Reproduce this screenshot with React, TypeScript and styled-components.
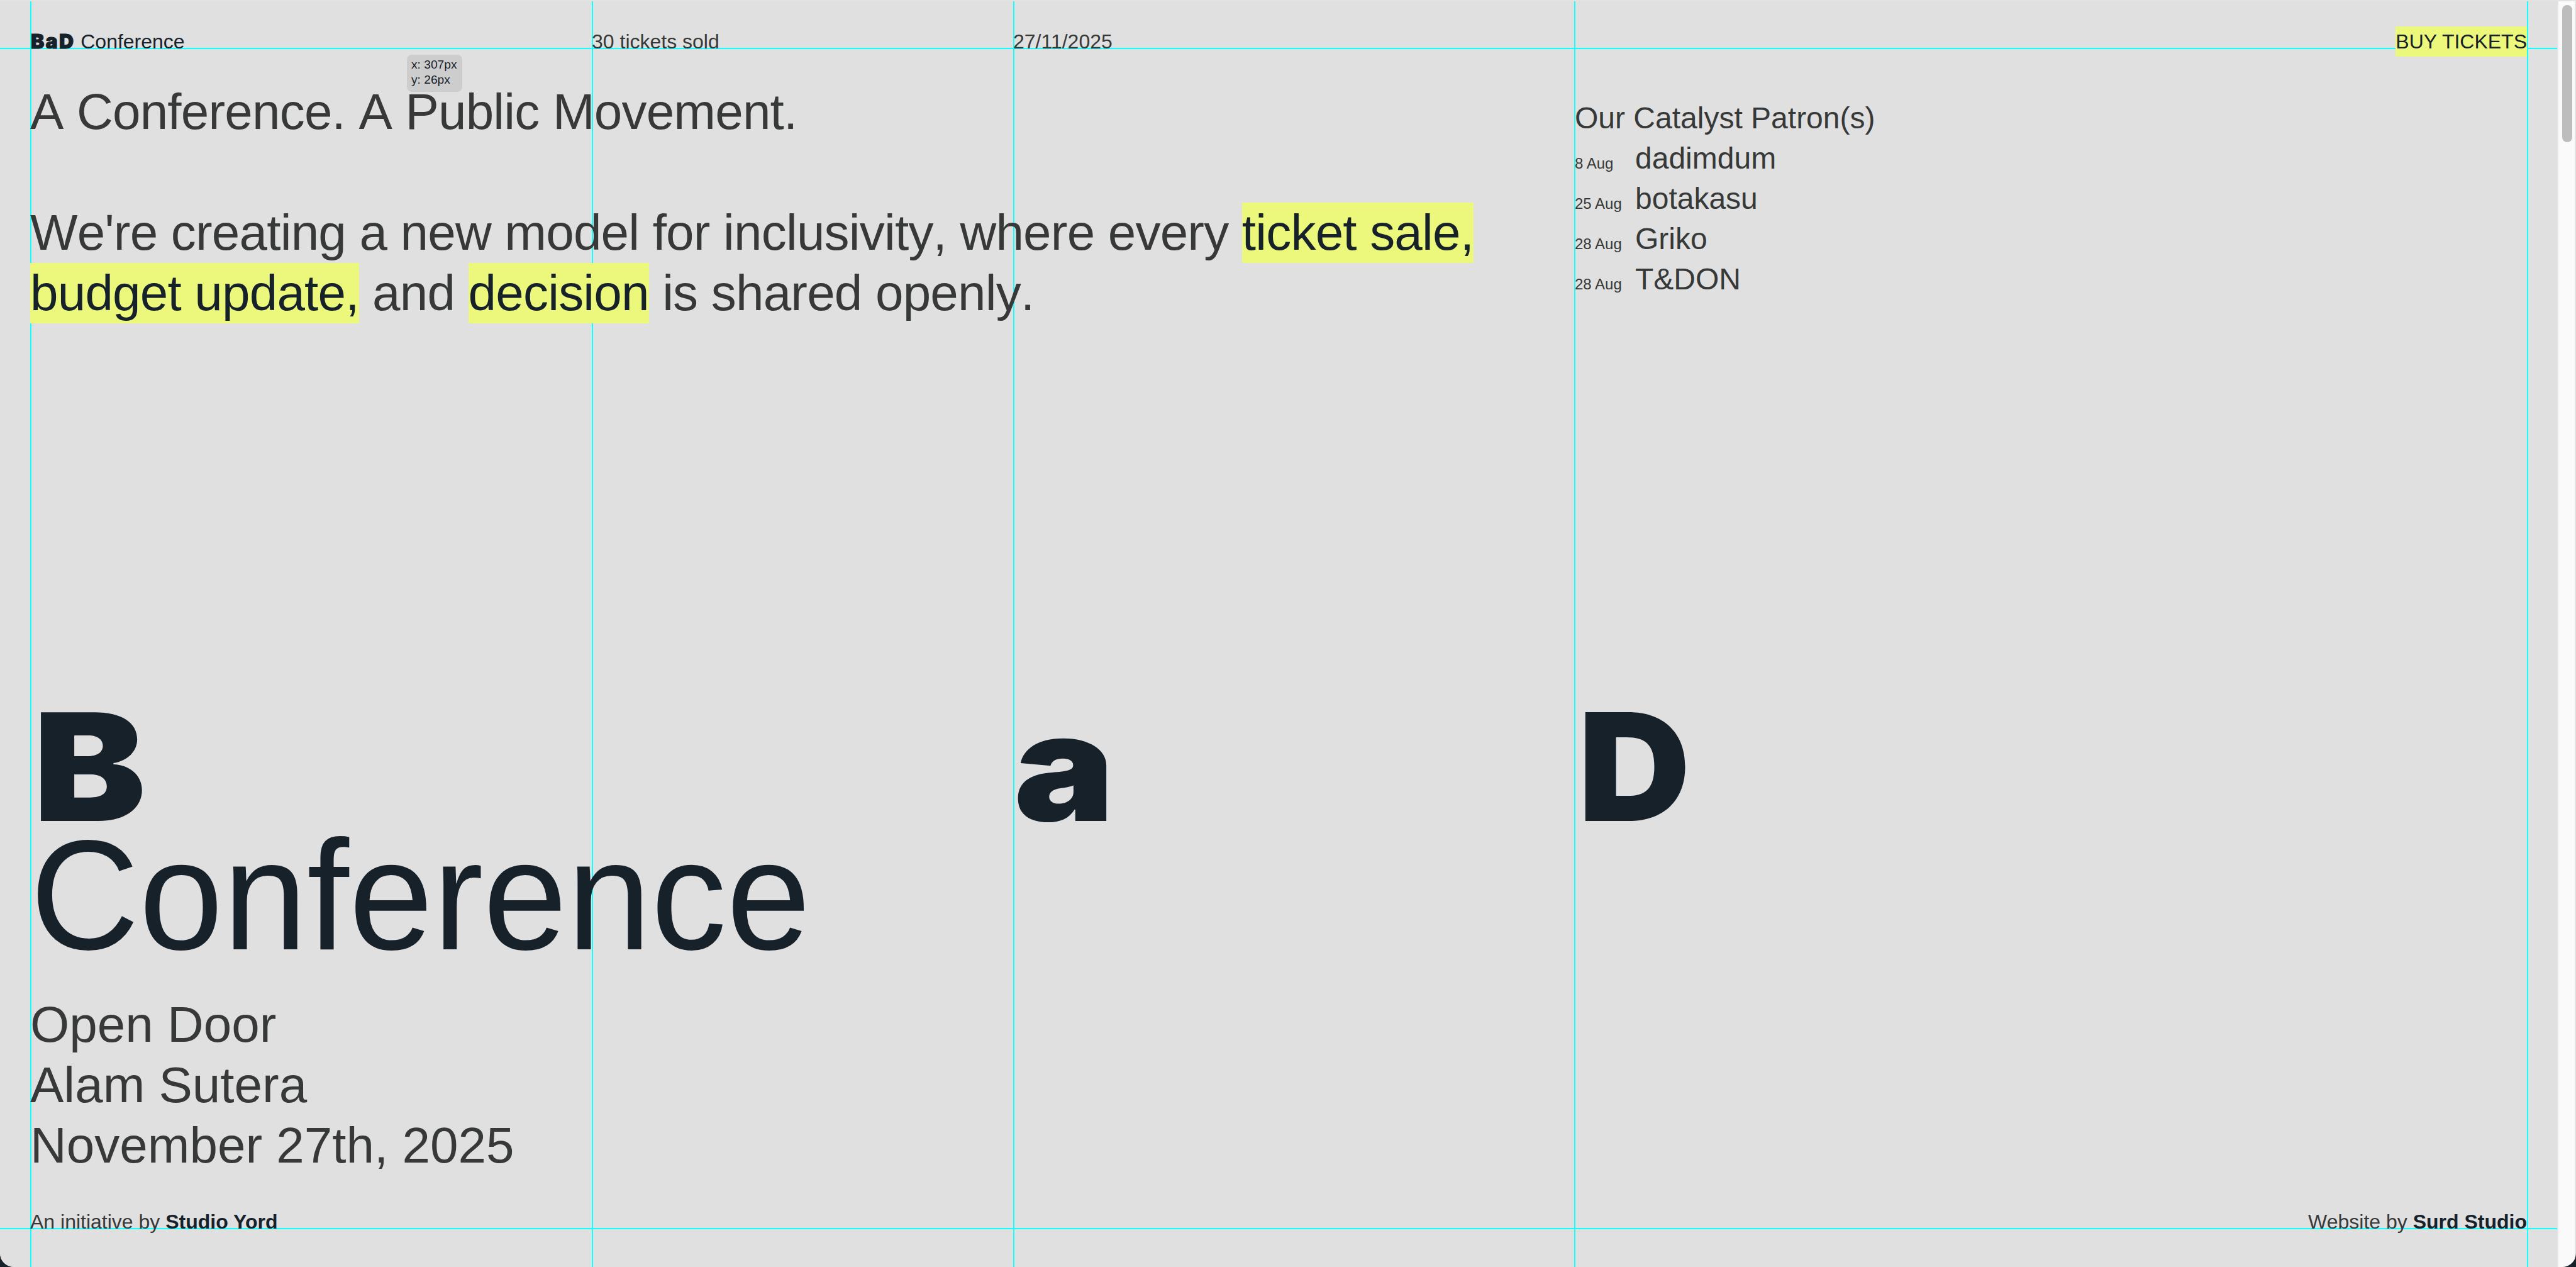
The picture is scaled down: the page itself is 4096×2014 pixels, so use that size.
import React from "react";
import styled, { createGlobalStyle } from "styled-components";

const colors = {
  paper: "#e0e0e0",
  ink: "#17212a",
  text: "#373938",
  lime: "#ecf87c",
  guide: "#12ffff",
};

const GlobalStyle = createGlobalStyle`
  * {
    box-sizing: border-box;
  }
  body {
    margin: 0;
    background: ${colors.ink};
    color: ${colors.text};
    font-family: "Liberation Sans", Arial, sans-serif;
    font-size: 32px;
    line-height: 48px;
  }
  p, h1, h2, ul {
    margin: 0;
    padding: 0;
    font-weight: 400;
  }
`;

const Window = styled.div`
  display: flex;
  width: 4096px;
  height: 2014px;
  padding: 2px 2px 0 0;
  overflow: hidden;
  background: #e3e3e3;
  border-radius: 0 0 22px 22px;
`;

const Page = styled.div`
  position: relative;
  isolation: isolate;
  flex-shrink: 0;
  display: flex;
  flex-direction: column;
  width: 4066px;
  background: ${colors.paper};
`;

const Scrollbar = styled.div`
  flex-shrink: 0;
  width: 26px;
  margin-left: 2px;
  padding: 6px 0 0 6px;
  background: #fafafa;
`;

const Thumb = styled.div`
  width: 16px;
  height: 218px;
  border-radius: 8px;
  background: #bdbdbd;
`;

const Guide = styled.div<{ $axis: "x" | "y"; $at: number }>`
  position: absolute;
  z-index: -1;
  background: ${colors.guide};
  ${({ $axis, $at }) =>
    $axis === "x"
      ? `left: ${$at}px; top: 0; bottom: 0; width: 2px;`
      : `top: ${$at}px; left: 0; right: 0; height: 2px;`}
`;

const Columns = styled.div`
  display: grid;
  grid-template-columns: 893px 670px 893px 1fr;
  padding: 0 48px;
`;

const Header = styled(Columns)`
  padding-top: 40px;
  height: 88px;
`;

const Brand = styled.span`
  color: ${colors.ink};
`;

const Black = styled.span`
  font-family: Inter, sans-serif;
  font-weight: 900;
`;

const BrandMark = styled(Black)`
  padding-left: 1px;
  letter-spacing: 0.07em;
  -webkit-text-stroke: 1px ${colors.ink};
`;

const Highlight = styled.span`
  display: inline-block;
  background: ${colors.lime};
  color: ${colors.ink};
`;

const BuyLink = styled(Highlight)`
  justify-self: end;
  height: 48px;
`;

const Intro = styled.div`
  display: grid;
  grid-template-columns: 2456px 1fr;
  padding: 40px 48px 0;
  height: 1030px;
`;

const Lead = styled.h2`
  font-size: 80px;
  line-height: 96px;
  letter-spacing: -0.01em;
  font-kerning: none;
`;

const Patrons = styled.ul`
  padding-top: 26px;
  list-style: none;
  font-size: 48px;
  line-height: 64px;
`;

const Patron = styled.li`
  display: grid;
  grid-template-columns: 96px 1fr;
  align-items: baseline;
`;

const PatronDate = styled.span`
  font-size: 24px;
  line-height: 24px;
`;

const Title = styled.h1`
  color: ${colors.ink};
  font-size: 240px;
  line-height: 204px;
`;

const TitleLetter = styled(Black)<{ $stretch: number; $indent: number }>`
  padding-left: ${({ $indent }) => $indent}px;
  transform-origin: 0 189px;
  transform: translateY(-4px) scale(${({ $stretch }) => $stretch}, 0.99);
`;

const TitleWord = styled.div`
  padding: 0 48px;
  transform-origin: 0 185px;
  transform: scaleY(1.04);
`;

const Venue = styled.p`
  padding: 53px 48px 0;
  font-size: 80px;
  line-height: 96px;
`;

const Footer = styled.div`
  display: flex;
  justify-content: space-between;
  padding: 49px 48px 0;

  b {
    color: ${colors.ink};
  }
`;

const Coordinates = styled.div`
  position: absolute;
  z-index: -1;
  left: 647px;
  top: 85px;
  width: 88px;
  height: 59px;
  padding: 4px 7px;
  border-radius: 8px;
  background: #cdcdcd;
  color: ${colors.ink};
  font-size: 19.2px;
  line-height: 24px;
  white-space: nowrap;
`;

const guidesX = [48, 941, 1611, 2503, 4018];
const guidesY = [74, 1950];

const patrons = [
  { date: "8 Aug", name: "dadimdum" },
  { date: "25 Aug", name: "botakasu" },
  { date: "28 Aug", name: "Griko" },
  { date: "28 Aug", name: "T&DON" },
];

const App = () => {
  return (
    <>
      <GlobalStyle />
      <Window>
        <Page>
          {guidesY.map((at) => (
            <Guide key={at} $axis="y" $at={at} />
          ))}
          {guidesX.map((at) => (
            <Guide key={at} $axis="x" $at={at} />
          ))}
          <Coordinates>
            x: 307px
            <br />
            y: 26px
          </Coordinates>

          <Header>
            <Brand>
              <BrandMark>BaD</BrandMark> Conference
            </Brand>
            <span>30 tickets sold</span>
            <span>27/11/2025</span>
            <BuyLink>BUY TICKETS</BuyLink>
          </Header>

          <Intro>
            <Lead>
              A Conference. A Public Movement.
              <br />
              <br />
              We're creating a new model for inclusivity, where every{" "}
              <Highlight>ticket sale,</Highlight>
              <br />
              <Highlight>budget update,</Highlight> and{" "}
              <Highlight>decision</Highlight> is shared openly.
            </Lead>
            <Patrons>
              <li>Our Catalyst Patron(s)</li>
              {patrons.map(({ date, name }) => (
                <Patron key={name}>
                  <PatronDate>{date}</PatronDate>
                  {name}
                </Patron>
              ))}
            </Patrons>
          </Intro>

          <Title>
            <Columns>
              <TitleLetter $stretch={1.12} $indent={4}>
                B
              </TitleLetter>
              <span />
              <TitleLetter $stretch={1.12} $indent={1}>
                a
              </TitleLetter>
              <TitleLetter $stretch={1.03} $indent={5}>
                D
              </TitleLetter>
            </Columns>
            <TitleWord>Conference</TitleWord>
          </Title>

          <Venue>
            Open Door
            <br />
            Alam Sutera
            <br />
            November 27th, 2025
          </Venue>

          <Footer>
            <span>
              An initiative by <b>Studio Yord</b>
            </span>
            <span>
              Website by <b>Surd Studio</b>
            </span>
          </Footer>
        </Page>
        <Scrollbar>
          <Thumb />
        </Scrollbar>
      </Window>
    </>
  );
};

export default App;
